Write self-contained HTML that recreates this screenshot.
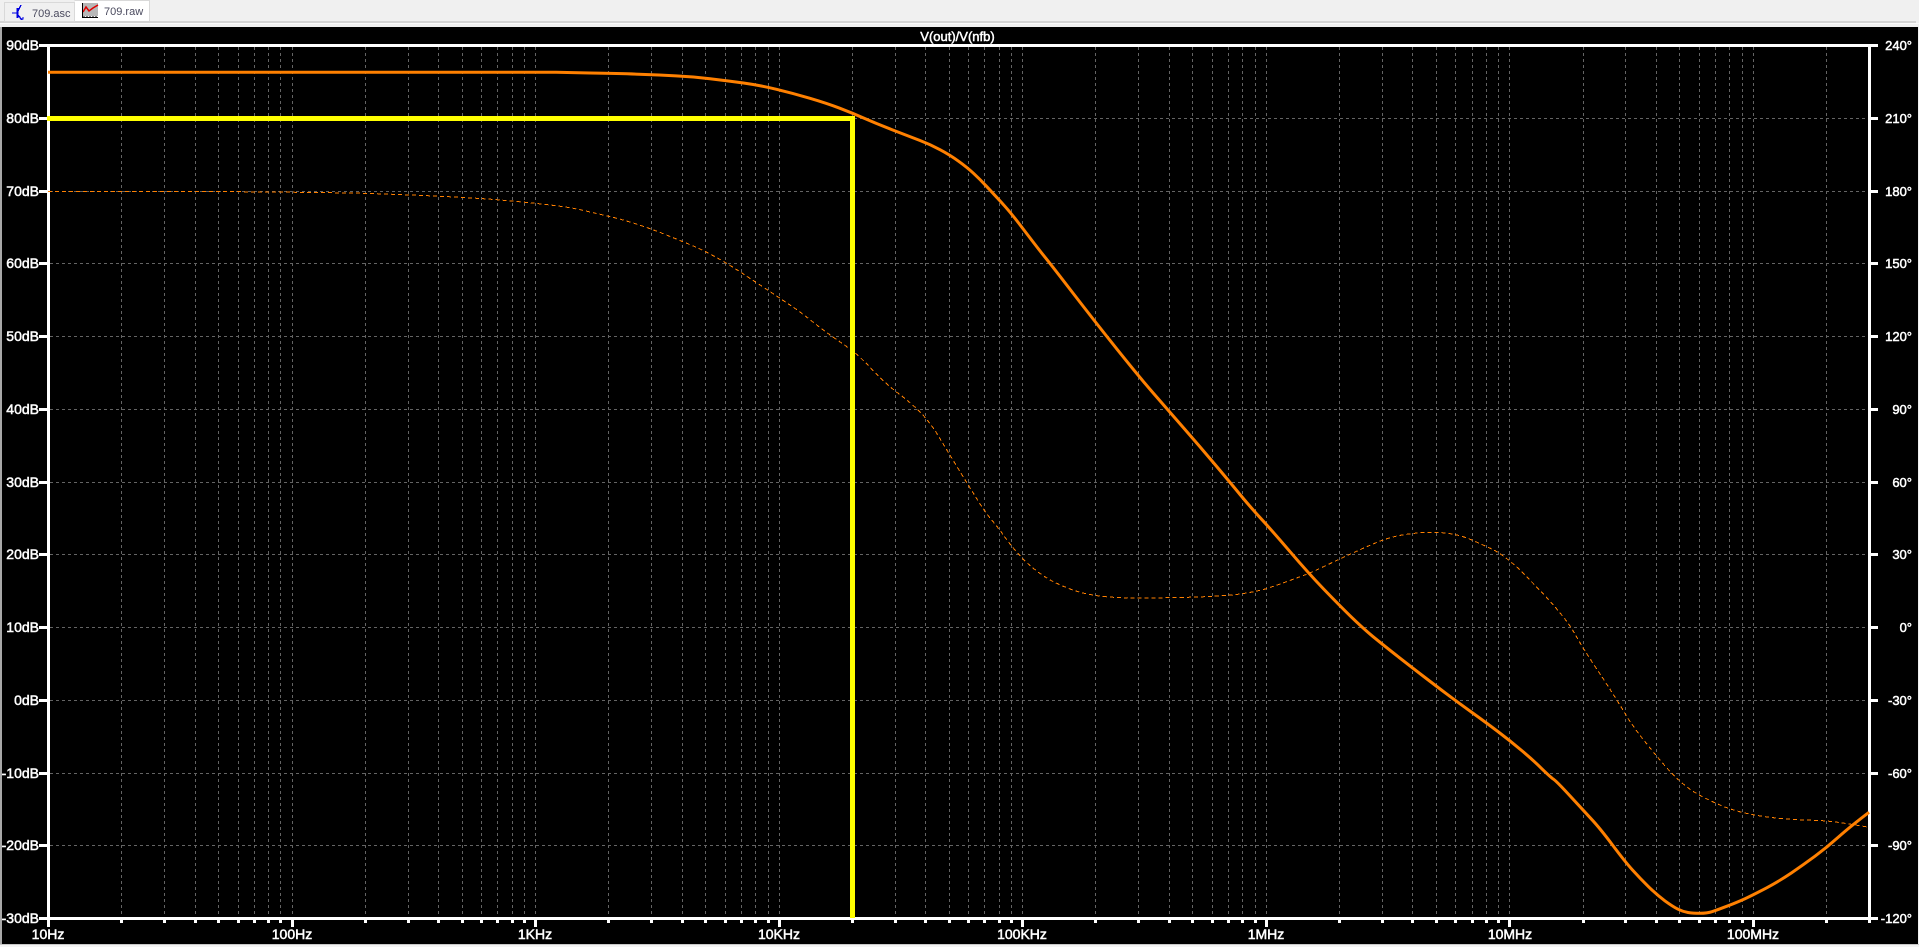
<!DOCTYPE html>
<html>
<head>
<meta charset="utf-8">
<title>709.raw</title>
<style>
html,body{margin:0;padding:0;width:1919px;height:947px;overflow:hidden;background:#f0f0f0}
svg{display:block;position:absolute;left:0;top:0}
.l{font-family:"Liberation Sans",Arial,sans-serif;font-size:14px;fill:#fff;stroke:#fff;stroke-width:.5px}
.r{font-family:"Liberation Sans",Arial,sans-serif;font-size:13px;fill:#fff;stroke:#fff;stroke-width:.5px}
.t{font-family:"Liberation Sans",Arial,sans-serif;font-size:13px;fill:#fff;stroke:#fff;stroke-width:.5px}
.tab{font-family:"Liberation Sans",Arial,sans-serif;font-size:11px;fill:#4a4a5e}
</style>
</head>
<body>
<svg width="1919" height="947" viewBox="0 0 1919 947" xmlns="http://www.w3.org/2000/svg">
<!-- chrome -->
<rect x="0" y="0" width="1919" height="947" fill="#f0f0f0"/>
<rect x="0" y="21" width="1916" height="2" fill="#d4d4d4"/>
<rect x="0" y="23" width="1919" height="1" fill="#fafafa"/>
<rect x="0" y="27" width="2" height="917" fill="#a8a8a8"/>
<rect x="2" y="27" width="1916" height="917" fill="#000"/>
<rect x="0" y="944" width="1919" height="1" fill="#c8c8c8"/>
<rect x="0" y="945" width="1919" height="2" fill="#f4f4f4"/>
<!-- tabs -->
<rect x="4.5" y="2.5" width="70" height="19" fill="#f0f0f0" stroke="#d9d9d9"/>
<rect x="75" y="0" width="74" height="21" fill="#fff"/>
<path d="M74.5 0.5H149.5V21" fill="none" stroke="#d9d9d9"/>
<g fill="none" stroke="#0000e0" stroke-width="1.4" shape-rendering="crispEdges">
<path d="M12 13H17"/>
<path d="M17.5 8V18" stroke-width="2"/>
<path d="M18 11L21 5"/>
<path d="M18 15L22 20"/>
<path d="M20 19h3v-2"/>
</g>
<rect x="83" y="3" width="15" height="13" fill="#b8b8b8"/>
<path d="M83 12L86 7L89 11L93 8L98 5" fill="none" stroke="#e00000" stroke-width="1.5"/>
<path d="M82.5 3V18M82 17.5H98M84 16v2M87 16v2M90 16v2M93 16v2M96 16v2" stroke="#000" stroke-width="1" fill="none" shape-rendering="crispEdges"/>
<text class="tab" x="32" y="17">709.asc</text>
<text class="tab" x="104" y="15">709.raw</text>
<!-- grid -->
<g fill="none" stroke="#646464" stroke-width="1" stroke-dasharray="3 3" shape-rendering="crispEdges">
<path d="M50 118.5H1868M50 191.5H1868M50 263.5H1868M50 336.5H1868M50 409.5H1868M50 482.5H1868M50 554.5H1868M50 627.5H1868M50 700.5H1868M50 773.5H1868M50 845.5H1868"/>
<path d="M121.5 47V917M164.5 47V917M195.5 47V917M218.5 47V917M238.5 47V917M254.5 47V917M268.5 47V917M280.5 47V917M292.5 47V917
M365.5 47V917M408.5 47V917M438.5 47V917M462.5 47V917M481.5 47V917M497.5 47V917M512.5 47V917M524.5 47V917M535.5 47V917
M608.5 47V917M651.5 47V917M682.5 47V917M705.5 47V917M725.5 47V917M741.5 47V917M755.5 47V917M768.5 47V917M779.5 47V917
M852.5 47V917M895.5 47V917M925.5 47V917M949.5 47V917M968.5 47V917M984.5 47V917M999.5 47V917M1011.5 47V917M1022.5 47V917
M1095.5 47V917M1138.5 47V917M1169.5 47V917M1192.5 47V917M1212.5 47V917M1228.5 47V917M1242.5 47V917M1255.5 47V917M1266.5 47V917
M1339.5 47V917M1382.5 47V917M1412.5 47V917M1436.5 47V917M1455.5 47V917M1472.5 47V917M1486.5 47V917M1498.5 47V917M1509.5 47V917
M1583.5 47V917M1625.5 47V917M1656.5 47V917M1679.5 47V917M1699.5 47V917M1715.5 47V917M1729.5 47V917M1742.5 47V917M1753.5 47V917
M1826.5 47V917"/>
</g>
<!-- axes -->
<g fill="#fff" shape-rendering="crispEdges">
<rect x="39" y="44" width="1839" height="3"/>
<rect x="39" y="917" width="1839" height="3"/>
<rect x="47" y="44" width="3" height="876"/>
<rect x="1868" y="44" width="3" height="876"/>
</g>
<g fill="none" stroke="#fff" stroke-width="3" shape-rendering="crispEdges">
<path d="M39 118.5H47M39 191.5H47M39 263.5H47M39 336.5H47M39 409.5H47M39 482.5H47M39 554.5H47M39 627.5H47M39 700.5H47M39 773.5H47M39 845.5H47"/>
<path d="M1871 118.5H1878M1871 191.5H1878M1871 263.5H1878M1871 336.5H1878M1871 409.5H1878M1871 482.5H1878M1871 554.5H1878M1871 627.5H1878M1871 700.5H1878M1871 773.5H1878M1871 845.5H1878"/>
<path d="M121.5 920v3M164.5 920v3M195.5 920v3M218.5 920v3M238.5 920v3M254.5 920v3M268.5 920v3M280.5 920v3
M365.5 920v3M408.5 920v3M438.5 920v3M462.5 920v3M481.5 920v3M497.5 920v3M512.5 920v3M524.5 920v3
M608.5 920v3M651.5 920v3M682.5 920v3M705.5 920v3M725.5 920v3M741.5 920v3M755.5 920v3M768.5 920v3
M852.5 920v3M895.5 920v3M925.5 920v3M949.5 920v3M968.5 920v3M984.5 920v3M999.5 920v3M1011.5 920v3
M1095.5 920v3M1138.5 920v3M1169.5 920v3M1192.5 920v3M1212.5 920v3M1228.5 920v3M1242.5 920v3M1255.5 920v3
M1339.5 920v3M1382.5 920v3M1412.5 920v3M1436.5 920v3M1455.5 920v3M1472.5 920v3M1486.5 920v3M1498.5 920v3
M1583.5 920v3M1625.5 920v3M1656.5 920v3M1679.5 920v3M1699.5 920v3M1715.5 920v3M1729.5 920v3M1742.5 920v3
M1826.5 920v3M1869.5 920v3"/>
<path d="M48.5 920v7M292.5 920v7M535.5 920v7M779.5 920v7M1022.5 920v7M1266.5 920v7M1509.5 920v7M1753.5 920v7"/>
</g>
<!-- phase -->
<path fill="none" stroke="#ff8000" stroke-width="1" stroke-dasharray="4 3" shape-rendering="crispEdges" d="M48 191.3H200Q264 192 300 192.3Q337 192.7 358 193.2Q379 193.7 407.5 194.9Q436 196 452 196.9Q468 197.7 483 198.7Q498 199.7 517 201.5Q536 203.3 553.5 205.4Q571 207.5 582 210.1Q593 212.7 605.5 215.5Q618 218.3 634 223.3Q650 228.3 666.5 235Q683 241.7 693 245.9Q703 250 715 256.7Q727 263.3 738.5 270.8Q750 278.3 765 288.3Q780 298.3 790 305Q800 311.7 811.5 320.9Q823 330 835 338.4Q847 346.7 853.5 351.7Q860 356.7 873.5 370.9Q887 385 898.5 393.5Q910 402 920 412Q930 422 939 437Q948 452 957.5 467.5Q967 483 976 497.5Q985 512 992.5 521Q1000 530 1004 535.9Q1008 541.7 1015 550Q1022 558.3 1028.5 564.2Q1035 570 1041.5 574.5Q1048 579 1054 582Q1060 585 1068.5 588.4Q1077 591.7 1086 593.7Q1095 595.7 1106 596.7Q1117 597.7 1127.5 598Q1138 598.3 1152.5 598Q1167 597.7 1183.5 597.4Q1200 597 1215 596.2Q1230 595.3 1240 594Q1250 592.7 1263.5 589.5Q1277 585.3 1288.5 581Q1300 576.7 1304 575.3Q1308 574 1323.5 566.7Q1339 559.3 1351 553.8Q1363 548.3 1372.5 544.2Q1382 540 1391 537.5Q1400 535 1411 533.7Q1422 532.3 1432.5 532.3Q1443 532.3 1453 534.2Q1463 536 1473 540.5Q1483 545 1490.5 548.4Q1498 551.7 1507.5 559.2Q1517 566.7 1525 575Q1533 583.3 1541.5 592Q1550 600.7 1560 612.9Q1570 625 1576.5 636.7Q1583 648.3 1593 663.3Q1603 678.3 1610.5 690Q1618 701.7 1625.5 714.2Q1633 726.7 1645 741.7Q1657 756.7 1665 765.9Q1673 775 1681.5 782.5Q1690 790 1700 795.4Q1710 800.7 1720 805Q1730 809.3 1741.5 812.2Q1753 815 1765 816.7Q1777 818.3 1790 819.2Q1803 820 1815 820.4Q1827 820.7 1838.5 822.4Q1850 824 1869 827.3"/>
<!-- yellow cursor trace -->
<path d="M47 118.5H852.5V918" fill="none" stroke="#ffff00" stroke-width="5" shape-rendering="crispEdges"/>
<!-- gain -->
<path fill="none" stroke="#ff8000" stroke-width="3" stroke-linejoin="round" d="M48 72.3H556L590 73Q626 73.5 642 74.4Q659 75 676 75.9Q693 76.7 710 78.7Q727 80.7 743.5 83Q760 85.3 776.5 89.3Q793 93.3 810 98.3Q827 103.3 840 108.3Q853 113.3 866.5 119.2Q880 125 895 130.9Q910 136.7 920 140.5Q930 144.3 940 149.7Q950 155 958.5 161.2Q967 167.3 973.5 173.3Q980 179.3 986.5 186.3Q993 193.3 1001.5 202.5Q1010 211.7 1018.5 222.9Q1027 234 1033.5 242.5Q1040 251 1045 257.2Q1050 263.3 1072.5 292.5Q1095 321.7 1117 349.2Q1139 376.7 1153.5 393.4Q1168 410 1184 428.4Q1200 446.7 1215 464.5Q1230 482.3 1240 494.5Q1250 506.7 1261.5 519.2Q1273 531.7 1290.5 552.2Q1308 572.7 1323.5 588.9Q1339 605 1351 616.7Q1363 628.3 1372.5 636.2Q1382 644 1397.5 656.2Q1413 668.3 1425 677.5Q1437 686.7 1447 694.2Q1457 701.7 1472 712.5Q1487 723.3 1498.5 732Q1510 740.7 1521.5 750.4Q1533 760 1541.5 768.4Q1550 776.7 1553.5 779.2Q1557 781.7 1570 795.9Q1583 810 1591.5 819.2Q1600 828.3 1612.5 845Q1625 861.7 1632.5 870Q1640 878.3 1648.5 886.7Q1657 895 1665 900.9Q1673 906.7 1678 909.2Q1683 911.7 1688 912.5Q1693 913.3 1700 913.3Q1707 913.3 1712 911.7Q1717 910 1727 906.2Q1737 902.3 1745 898.7Q1753 895 1766.5 887.9Q1780 880.7 1791.5 872.9Q1803 865 1815 856.2Q1827 847.3 1838.5 837Q1850 826.7 1869 812.3"/>
<!-- title -->
<text class="t" x="957.5" y="41" text-anchor="middle">V(out)/V(nfb)</text>
<!-- left labels -->
<g class="l" text-anchor="end">
<text x="39" y="50">90dB</text>
<text x="39" y="123">80dB</text>
<text x="39" y="196">70dB</text>
<text x="39" y="268">60dB</text>
<text x="39" y="341">50dB</text>
<text x="39" y="414">40dB</text>
<text x="39" y="487">30dB</text>
<text x="39" y="559">20dB</text>
<text x="39" y="632">10dB</text>
<text x="39" y="705">0dB</text>
<text x="39" y="778">-10dB</text>
<text x="39" y="850">-20dB</text>
<text x="39" y="923">-30dB</text>
</g>
<!-- right labels -->
<g class="r" text-anchor="end">
<text x="1912" y="50">240°</text>
<text x="1912" y="123">210°</text>
<text x="1912" y="196">180°</text>
<text x="1912" y="268">150°</text>
<text x="1912" y="341">120°</text>
<text x="1912" y="414">90°</text>
<text x="1912" y="487">60°</text>
<text x="1912" y="559">30°</text>
<text x="1912" y="632">0°</text>
<text x="1912" y="705">-30°</text>
<text x="1912" y="778">-60°</text>
<text x="1912" y="850">-90°</text>
<text x="1912" y="923">-120°</text>
</g>
<!-- x labels -->
<g class="l" text-anchor="middle">
<text x="48" y="939">10Hz</text>
<text x="292" y="939">100Hz</text>
<text x="535" y="939">1KHz</text>
<text x="779" y="939">10KHz</text>
<text x="1022" y="939">100KHz</text>
<text x="1266" y="939">1MHz</text>
<text x="1510" y="939">10MHz</text>
<text x="1753" y="939">100MHz</text>
</g>
</svg>
</body>
</html>
